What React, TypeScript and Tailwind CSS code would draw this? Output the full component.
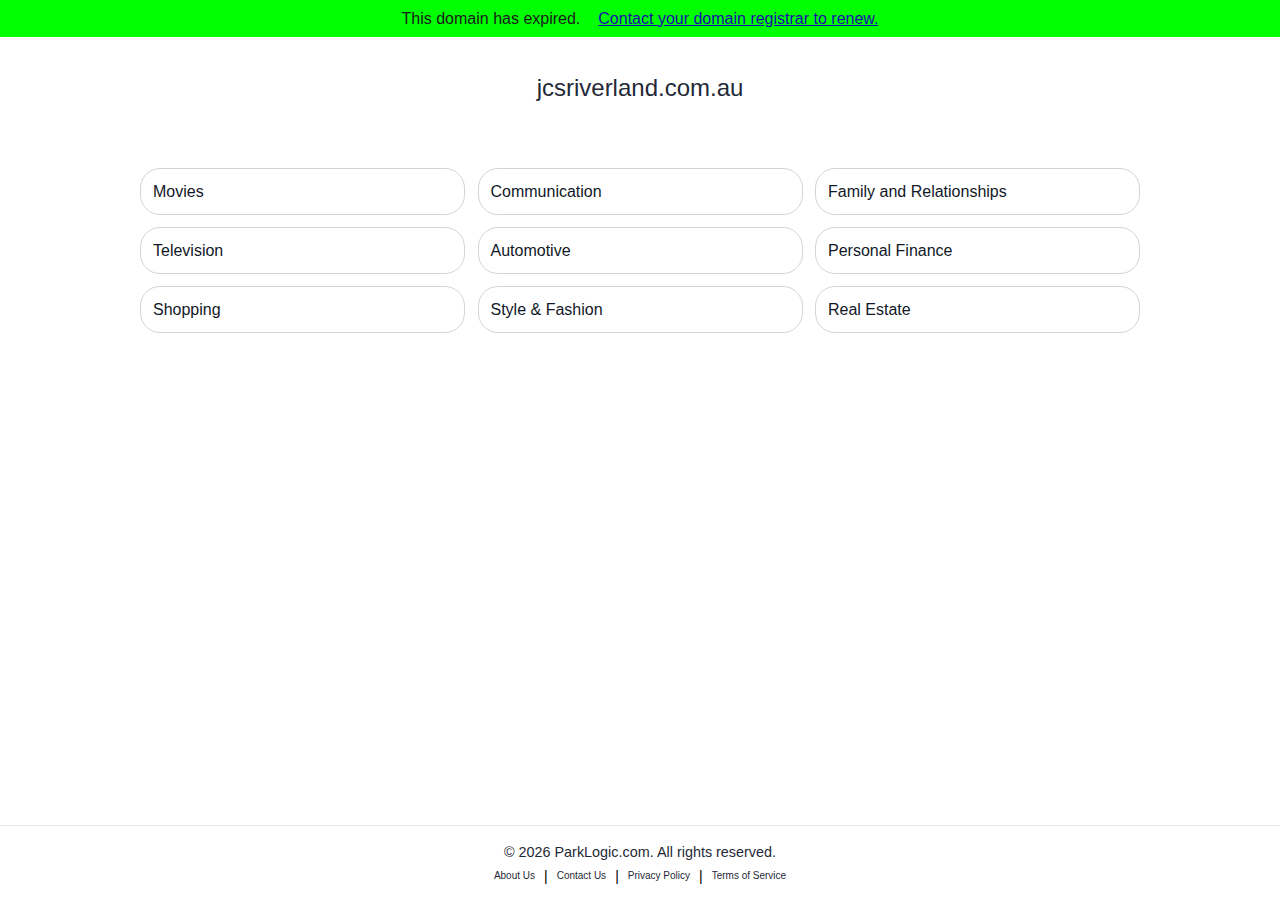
import React from 'react';

const categories = [
  'Movies',
  'Communication',
  'Family and Relationships',
  'Television',
  'Automotive',
  'Personal Finance',
  'Shopping',
  'Style & Fashion',
  'Real Estate',
];

const footerLinks = ['About Us', 'Contact Us', 'Privacy Policy', 'Terms of Service'];

const App: React.FC = () => {
  return (
    <div className="min-h-screen flex flex-col bg-white text-[#111827] font-['Liberation_Sans',Arial,sans-serif]">
      {/* expiry notice */}
      <div className="h-[37px] bg-[#00ff00] flex items-center justify-center text-[16px] text-[#1a1a1a]">
        <span>This domain has expired.</span>
        <a href="#" className="ml-[18px] text-[#1a0dab] underline">
          Contact your domain registrar to renew.
        </a>
      </div>

      <main className="flex-1">
        <h1 className="mt-[35px] text-center text-[24px] leading-[32px] text-[#1f2937]">jcsriverland.com.au</h1>

        <div className="mx-auto mt-[64px] w-[1000px] grid grid-cols-3 gap-x-[12.5px] gap-y-[12px]">
          {categories.map((c) => (
            <a
              key={c}
              href="#"
              className="h-[47px] flex items-center px-[12px] rounded-[20px] border border-[#d4d4d8] text-[16px] text-[#111827]"
            >
              {c}
            </a>
          ))}
        </div>
      </main>

      <footer className="h-[75px] border-t border-[#e5e7eb] flex flex-col items-center pt-[17px]">
        <p className="text-[14.4px] leading-[18px] text-[#1f2937]">© 2026 ParkLogic.com. All rights reserved.</p>
        <div className="mt-[7px] flex items-center text-[10px] text-[#1f2937]">
          {footerLinks.map((l, i) => (
            <React.Fragment key={l}>
              {i > 0 && <span className="mx-[9px] text-[14px] leading-[14px] text-black">|</span>}
              <a href="#">{l}</a>
            </React.Fragment>
          ))}
        </div>
      </footer>
    </div>
  );
};

export default App;
